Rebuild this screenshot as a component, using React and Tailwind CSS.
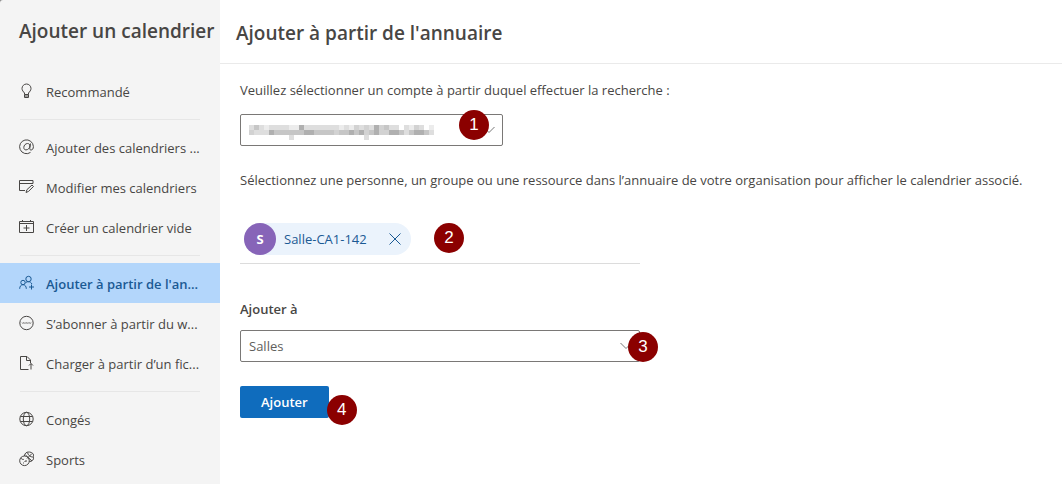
import React from 'react';

const stroke = { fill: 'none', stroke: 'currentColor', strokeWidth: 1, strokeLinecap: 'butt' };

function Icon({ children }) {
  return (
    <svg viewBox="0 0 16 16" className="size-4 shrink-0" aria-hidden="true" {...stroke}>
      {children}
    </svg>
  );
}

const icons = {
  bulb: (
    <Icon>
      <path d="M6.500 11.500V10C5.300 8.600 4 7.400 4 5.500a4.500 4.500 0 0 1 9 0c0 1.900-1.300 3.100-2.500 4.500v1.500zM6.500 11.500v3h4v-3M6.500 13h4" />
    </Icon>
  ),
  at: (
    <Icon>
      <path d="M12.500 13.400A6.900 6.900 0 1 1 15.400 7.500c0 2.300-1 3.500-2.300 3.500-1 0-1.500-.6-1.300-1.800l.7-4.700M11.900 7c0-1.600-.9-2.500-2.400-2.500-2 0-3.700 1.900-3.700 4 0 1.500.8 2.400 2.200 2.400 2.100 0 3.700-2 3.900-3.900z" />
    </Icon>
  ),
  edit: (
    <Icon>
      <path d="M7 11.500H1.500v-10h13.500v3M1.500 4.500h13.500M8 13.500l.9-2.800 5.100-4.700 1.500 1.500-5 4.900z" />
    </Icon>
  ),
  add: (
    <Icon>
      <path d="M1.500 2.500h14v11h-14zM1.500 4.500h14M4.500 1v1.500M12.500 1v1.500M8.500 6v6M5.500 9h6" />
    </Icon>
  ),
  people: (
    <Icon>
      <circle cx="10.500" cy="4" r="2.700" />
      <circle cx="5" cy="7.500" r="2.200" />
      <path d="M1.700 13.800c0-2.500 1.300-4.100 3.300-4.100s3.300 1.600 3.300 4.100M7.300 8.200C8 7.200 9 6.700 10.500 6.700c1.600 0 2.800.9 3.400 2.300M13.500 9.500v5M11 12h5" />
    </Icon>
  ),
  web: (
    <Icon>
      <circle cx="8.500" cy="8" r="6.700" />
      <path d="M4 7.500l.8 1 .7-1 .7 1 .7-1M7.200 7.500l.7 1 .7-1 .7 1 .7-1M10.300 7.500l.7 1 .7-1 .7 1 .7-1" strokeWidth="0.600" />
    </Icon>
  ),
  file: (
    <Icon>
      <path d="M10.500 14.500H2.500v-13h6.500l3.500 3.500v3M8.500 1.500v4h4M13 14.500v-6M11 10.500l2-2 2 2" />
    </Icon>
  ),
  globe: (
    <Icon>
      <circle cx="8.500" cy="8" r="6.700" />
      <ellipse cx="8.500" cy="8" rx="3.200" ry="6.700" />
      <path d="M2.300 5.500h12.400M2.300 10.500h12.400" />
    </Icon>
  ),
  sports: (
    <Icon>
      <circle cx="6.500" cy="9.800" r="4.800" />
      <path d="M6.300 5a4.800 4.800 0 1 1 5 5.600M7.500 4l6.500 6M9.500 1.500c.5 2.500 2.500 4.500 6 4.700M14 2.500l-5 5M2.800 6.800c.6 1.300 1.700 1.800 3 1.600M6.500 10.500h.9M5 12h.9M8 9v2" />
    </Icon>
  ),
};

const groups = [
  [{ icon: 'bulb', label: 'Recommandé' }],
  [
    { icon: 'at', label: 'Ajouter des calendriers ...' },
    { icon: 'edit', label: 'Modifier mes calendriers' },
    { icon: 'add', label: 'Créer un calendrier vide' },
  ],
  [
    { icon: 'people', label: "Ajouter à partir de l'an...", active: true },
    { icon: 'web', label: 'S’abonner à partir du w...' },
    { icon: 'file', label: 'Charger à partir d’un fic...' },
  ],
  [
    { icon: 'globe', label: 'Congés' },
    { icon: 'sports', label: 'Sports' },
  ],
];

function NavItem({ icon, label, active }) {
  return (
    <li>
      <a
        href="#"
        aria-current={active ? 'page' : undefined}
        className={
          active
            ? 'flex h-10 items-center gap-3 whitespace-nowrap bg-[#b3d6fb] pl-[18px] font-semibold text-[#1b5a94]'
            : 'flex h-10 items-center gap-3 whitespace-nowrap pl-[18px] text-[#484644]'
        }
      >
        {icons[icon]}
        <span className="pt-0.5">{label}</span>
      </a>
    </li>
  );
}

function Step({ n, className }) {
  return (
    <span
      className={`absolute flex size-[30px] items-center justify-center rounded-full bg-[#8b0000] font-['Liberation_Sans',sans-serif] text-[17px] text-white ${className}`}
    >
      {n}
    </span>
  );
}

function Chevron() {
  return (
    <svg viewBox="0 0 12 8" className="pointer-events-none absolute top-3 right-2 h-2 w-3" aria-hidden="true" {...stroke}>
      <path d="M0.500 1l5.500 5.500L11.500 1" stroke="#767676" />
    </svg>
  );
}

const selectStyle =
  'h-8 w-full appearance-none rounded-xs border border-[#7a7876] bg-white px-2 text-[13px] text-[#605e5c]';

const mosaic = [
  'dbdeddddeeadddddddedecdcdacbdd decd eddae',
  'cdddabbbbbbaabbbbcbbabacbaccaabdbaabdcbcd',
].map((row) => row.slice(0, 37));
const tails = [8, 23];
const tones = { a: '#b0b0b0', b: '#c6c6c6', c: '#d2d2d2', d: '#dedede', e: '#ececec', ' ': '#ffffff' };

function MaskedAccount() {
  return (
    <svg viewBox="0 0 185 15" className="pointer-events-none absolute top-[11px] left-[9px] h-[15px] w-[185px]" aria-hidden="true">
      {mosaic.map((row, y) =>
        [...row].map((t, x) => (
          <rect key={`${x}-${y}`} x={x * 5} y={y * 5} width="5" height="5" fill={tones[t]} />
        )),
      )}
      {tails.map((x) => (
        <rect key={x} x={x * 5} y="10" width="5" height="5" fill={tones.d} />
      ))}
    </svg>
  );
}

export default function App() {
  return (
    <div className="flex min-h-screen bg-[#8a8a8a] font-['Open_Sans','Noto_Sans',sans-serif] text-[13px] leading-5 text-[#484644]">
      <aside className="w-[220px] shrink-0 rounded-tl-[3px] bg-[#f4f4f4]">
        <h1 className="h-[71px] whitespace-nowrap pt-[19px] pl-[19px] text-[19px] leading-6 font-semibold">Ajouter un calendrier</h1>
        <nav aria-label="Ajouter un calendrier">
          {groups.map((items, i) => (
            <React.Fragment key={items[0].label}>
              {i > 0 && <hr className="mx-5 mt-2 -mb-px h-px border-0 bg-[#e6e6e6]" />}
              <ul className={i > 0 ? 'pt-2' : ''}>
                {items.map((item) => (
                  <NavItem key={item.label} {...item} />
                ))}
              </ul>
            </React.Fragment>
          ))}
        </nav>
      </aside>

      <main className="min-w-0 flex-1 bg-white">
        <header className="flex h-16 items-center border-b border-[#eaeaea] px-4 pt-0.5">
          <h2 className="text-[19px] leading-6 font-semibold">Ajouter à partir de l'annuaire</h2>
        </header>

        <form className="px-5 pt-4" onSubmit={(e) => e.preventDefault()}>
          <label htmlFor="account" className="block">
            Veuillez sélectionner un compte à partir duquel effectuer la recherche :
          </label>
          <div className="relative mt-3.5 max-w-[263px]">
            <select id="account" className={selectStyle}>
              <option value="1"></option>
            </select>
            <MaskedAccount />
            <Chevron />
            <Step n="1" className="right-[14px] -top-1" />
          </div>

          <label htmlFor="people" className="mt-6 block">
            Sélectionnez une personne, un groupe ou une ressource dans l’annuaire de votre organisation pour afficher le calendrier associé.
          </label>
          <div className="relative mt-7 flex max-w-[400px] border-b border-[#dcdcdc] px-1 pt-[5px] pb-2">
            <div className="flex h-8 shrink-0 items-center rounded-full bg-[#ebf3fc] pr-2 text-[#1b5a94]">
              <span className="flex size-8 items-center justify-center rounded-full bg-[#8764b8] font-bold text-white">S</span>
              <span className="ml-2">Salle-CA1-142</span>
              <button type="button" aria-label="Supprimer Salle-CA1-142" className="ml-5 flex size-4 items-center justify-center">
                <svg viewBox="0 0 12 12" className="size-3" aria-hidden="true" {...stroke}>
                  <path d="M0.500 0.500l11 11M11.500 0.500l-11 11" />
                </svg>
              </button>
            </div>
            <input id="people" type="text" className="min-w-0 flex-1 bg-transparent outline-none" />
            <Step n="2" className="left-[194px] top-[5px]" />
          </div>

          <label htmlFor="target" className="mt-[35px] block font-semibold">Ajouter à</label>
          <div className="relative mt-[11px] max-w-[400px]">
            <select id="target" className={selectStyle}>
              <option>Salles</option>
            </select>
            <Chevron />
            <Step n="3" className="-right-[18px] top-0.5" />
          </div>

          <div className="relative mt-6 w-fit">
            <button type="submit" className="block h-8 rounded-xs bg-[#0f6cbd] px-[21px] font-semibold text-white">
              Ajouter
            </button>
            <Step n="4" className="-right-7 top-[9px]" />
          </div>
        </form>
      </main>
    </div>
  );
}
